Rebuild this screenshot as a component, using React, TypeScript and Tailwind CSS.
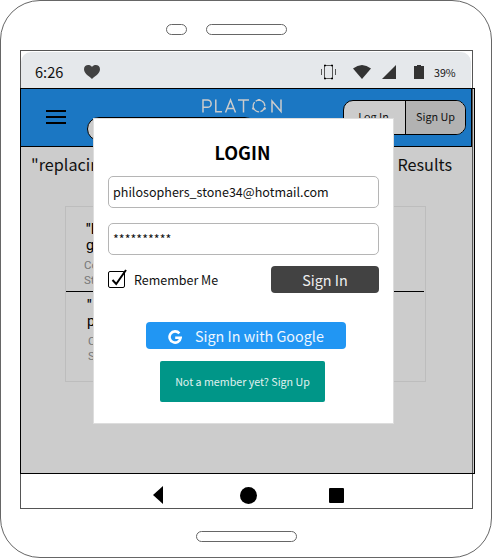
import React from "react";

function VibrateIcon() {
  return (
    <svg width="16" height="16" viewBox="0 0 16 16" className="shrink-0" fill="none">
      <rect x="3.5" y="1.500" width="8" height="13" stroke="#555" strokeWidth="1" />
      <path d="M3 1.500h2M10 1.500h2M3 14.500h2M10 14.500h2" stroke="#000" strokeWidth="1.3" />
      <path d="M.5 5v6M14.500 5v6" stroke="#555" strokeWidth="1" />
    </svg>
  );
}

function Logo() {
  return (
    <svg width="80" height="16" viewBox="0 0 80 16" fill="none" stroke="#ccc" strokeWidth="1.5" className="absolute left-[181px] top-[9px]">
      <path d="M1 14.500V2h4.500a3.500 3.500 0 0 1 0 7.300H1" />
      <path d="M13.800 1.500v12.200H20" />
      <path d="M23.500 14.500l5-12.500 5 12.500M25.500 10.500h6.200" />
      <path d="M36 2h11M41.500 2v12.500" />
      <circle cx="57" cy="8" r="5.800" strokeWidth="1.300" strokeDasharray="6.100 1.188" transform="rotate(-60 57 8)" />
      <path d="M55.700 2h2.600M50.700 9.500l1.200 2M62.100 11.500l1.200-2" strokeWidth="2.200" />
      <path d="M70 14.500V3l9 10.500V1.500" />
    </svg>
  );
}

interface ResultProps {
  title: string;
  second: string;
  author: string;
  detail: string;
  titleIndent: string;
  detailIndent: string;
}

function Result({ title, second, author, detail, titleIndent, detailIndent }: ResultProps) {
  return (
    <div className="font-['Roboto',sans-serif]">
      <div className={`${titleIndent} text-[14.5px] leading-[16px] text-black`}>
        <div className="font-medium">{title}</div>
        <div>{second}</div>
      </div>
      <div className={`${detailIndent} mt-[4px] text-[11.5px] leading-[15px] text-[#777]`}>
        <div>{author}</div>
        <div>{detail}</div>
      </div>
    </div>
  );
}

function LoginDialog() {
  return (
    <div className="absolute left-[72px] top-[29px] flex h-[306px] w-[301px] flex-col border border-[#ddd] bg-white px-[14px]">
      <h1 className="mt-[21px] -ml-[2px] text-center text-[18px] leading-6 font-bold text-black">LOGIN</h1>
      <div className="mt-[12px] h-8 rounded-[5px] border border-[#b5b5b5] px-1 text-[12.55px] leading-[29px]">
        philosophers_stone34@hotmail.com
      </div>
      <div className="mt-[15px] h-8 rounded-[5px] border border-[#b5b5b5] px-1 text-[12.5px] leading-[30px]">
        **********
      </div>
      <div className="mt-[11px] flex h-[27px] items-center">
        <svg width="20" height="20" viewBox="0 0 20 20" fill="none" className="-mt-[3px] shrink-0">
          <rect x=".5" y="3.500" width="16" height="16" rx="1.500" stroke="#000" />
          <path d="M4.500 12l3.700 4L18 2" stroke="#000" strokeWidth="2" />
        </svg>
        <span className="-mt-px ml-[6px] text-[12.5px] leading-[25px]">Remember Me</span>
        <button className="ml-auto h-[27px] w-[108px] rounded-[4px] bg-[#424242] text-[14.4px] leading-[27px] text-[#eee]">Sign In</button>
      </div>
      <button className="mt-[29px] ml-[38px] flex h-[27px] w-[200px] items-center rounded-[4px] bg-[#2196f3] pl-[22px] text-[14.35px] text-[#eef6ff]">
        <svg width="14" height="14" viewBox="0 0 14 14" fill="none" className="mt-[3px]">
          <path d="M11.400 3.300A5.600 5.600 0 1 0 12.700 7.700H7.200" stroke="#fff" strokeWidth="2.600" />
        </svg>
        <span className="ml-[13px] leading-[27px] whitespace-nowrap">Sign In with Google</span>
      </button>
      <button className="mt-3 ml-[52px] h-[41px] w-[165px] rounded-[2px] bg-[#009688] text-[10.7px] leading-[41px] text-[#e0f2f0]">
        Not a member yet? Sign Up
      </button>
    </div>
  );
}

export default function App() {
  return (
    <main className="flex h-[558px] w-[492px] flex-col items-center rounded-[40px] border border-[#666] bg-white font-['Noto_Sans_CJK_SC',sans-serif] text-[#111]">
      <div className="mt-[23px] flex h-[11px] w-full gap-[19px] pl-[165px]">
        <div className="w-[21px] rounded-full border border-[#666]" />
        <div className="w-[81px] rounded-full border border-[#666]" />
      </div>

      <section className="mt-[15px] ml-[1px] flex h-[459px] w-[453px] shrink-0 flex-col border border-[#555]">
        <div className="mt-px mr-px flex h-9 shrink-0 items-center rounded-t-[10px] bg-[#e5e8eb] pl-[14px]">
          <span className="mt-[3px] w-[48px] text-[14.6px] leading-9">6:26</span>
          <svg width="18" height="16" viewBox="0 0 18 16" className="mt-[3px] shrink-0">
            <path d="M9 15C7.500 13 1 10 1 5.200 1 .5 6.800-.2 9 3c2.200-3.200 8-2.500 8 2.200C17 10 10.500 13 9 15z" fill="#424242" />
          </svg>
          <div className="mt-[3px] ml-[220px] flex items-center">
            <VibrateIcon />
            <svg width="18" height="14" viewBox="0 0 18 14" className="ml-4"><path d="M0 3.500Q9-3.500 18 3.500L9 14z" fill="#333" /></svg>
            <svg width="14" height="14" viewBox="0 0 14 14" className="ml-[11px]"><path d="M0 14L14 0v14z" fill="#333" /></svg>
            <svg width="10" height="14" viewBox="0 0 10 14" className="ml-[18px]"><path d="M0 1h3V0h4v1h3v13H0z" fill="#333" /></svg>
            <span className="mt-[3px] ml-[10px] text-[10.7px] leading-4">39%</span>
          </div>
        </div>

        <div className="relative -ml-px flex h-[386px] w-[455px] shrink-0 flex-col border border-black bg-[#ccc]">
          <header className="relative flex h-[58px] w-[451px] shrink-0 border-r border-b border-black bg-[#1b77c3]">
            <div className="mt-[21px] ml-[25px] flex h-[14px] w-5 flex-col justify-between">
              <i className="h-[2px] bg-black" /><i className="h-[2px] bg-black" /><i className="h-[2px] bg-black" />
            </div>
            <div className="mt-[28px] ml-[21px] h-6 w-[170px] rounded-full border border-black bg-[#ccc]" />
            <Logo />
            <div className="mt-[11px] mr-[5px] ml-auto flex h-[35px] w-[123px] overflow-hidden rounded-[10px] border border-black bg-[#ccc] text-center text-[10.8px] leading-[31px]">
              <span className="w-[61px] pr-[2px]">Log In</span>
              <span className="flex-1 border-l border-black bg-[#b2b2b2]">Sign Up</span>
            </div>
          </header>
          <div className="mt-[4px] flex justify-between pr-[22px] pl-[10px] text-[16.2px] leading-[26px]">
            <span>"replacing</span>
            <span>Results</span>
          </div>
          <div className="mt-[29px] ml-[44px] h-[176px] w-[361px] border border-[#bdbdbd]">
            <div className="h-[85px] w-[358px] border-b border-black pt-[15px]">
              <Result title={'"I'} second="g" author="Co" detail="St" titleIndent="pl-[20px]" detailIndent="pl-[18px]" />
            </div>
            <div className="pt-[6px]">
              <Result title={'"'} second="p" author="C" detail="S" titleIndent="pl-[21px]" detailIndent="pl-[22px]" />
            </div>
          </div>
          <LoginDialog />
          <div className="absolute top-0 left-[451px] h-full w-px bg-[#555]" />
        </div>

        <nav className="flex h-[34px] items-center pt-[8px] pl-[132px]">
          <svg width="10" height="18" viewBox="0 0 10 18"><path d="M0 9L10 0v18z" /></svg>
          <div className="ml-[77px] size-[17px] rounded-full bg-black" />
          <div className="ml-[72px] size-[15px] rounded-[1px] bg-black" />
        </nav>
      </section>
      <div className="mt-[22px] h-[11px] w-[101px] shrink-0 rounded-full border border-[#666]" />
    </main>
  );
}
